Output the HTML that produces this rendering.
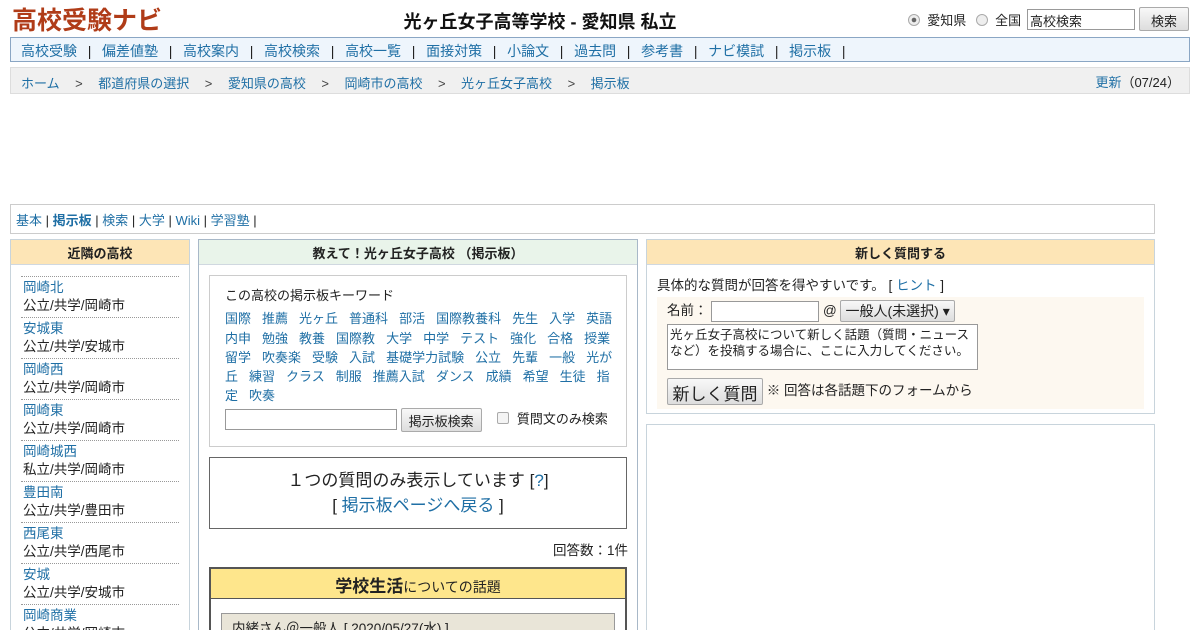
<!DOCTYPE html>
<html><head><meta charset="utf-8"><style>
*{box-sizing:border-box;margin:0;padding:0}
html{width:1200px;height:630px;overflow:hidden}
body{width:1200px;height:630px;overflow:hidden;background:#fff;font-family:"Liberation Sans","Noto Sans CJK JP",sans-serif;font-size:13px;color:#222;position:relative}
a{color:#1f6fa5;text-decoration:none}
.abs{position:absolute}
.logo{left:12px;top:1px;font-size:25px;font-weight:bold;color:#b03c18}
.title{left:0;width:1080px;top:8px;text-align:center;font-size:18px;font-weight:bold;color:#111}
.nav{left:10px;top:37px;width:1180px;height:25px;background:#eef5fc;border:1px solid #8aa6c4;padding:3px 10px;font-size:14px;white-space:nowrap}
.nav span{margin:0 10.7px;color:#222}
.bc{left:10px;top:67px;width:1180px;height:27px;background:#f0f0f0;border:1px solid #ddd;padding:5px 10px;font-size:13px;white-space:nowrap}
.bc span{margin:0 15.5px;color:#444}
.tabs{left:10px;top:204px;width:1145px;height:30px;border:1px solid #ccc;padding:5px 5px;font-size:13px}
.box{border:1px solid #c8d4dc}
.hd{height:25px;text-align:center;font-weight:bold;font-size:13px;padding-top:3px;border-bottom:1px solid #d0d8e0}
.left{left:10px;top:239px;width:180px;height:420px}
.left .hd{background:#fde5b6}
.item{margin:0 10px;border-top:1px dotted #999;padding:2px 2px 1px 2px;height:41px;font-size:13.5px;line-height:18px}
.mid{left:198px;top:239px;width:440px;height:420px;border-color:#a8b8c8}
.mid .hd{background:#e9f4ea}
.right{left:646px;top:239px;width:509px;height:175px}
.right .hd{background:#fde5b6}
.btn{border:1px solid #aaa;background:linear-gradient(#f8f8f8,#ddd);border-radius:2px;display:inline-block;text-align:center}
.kw{margin-top:4px}
.kw div{white-space:nowrap}
.kw a{margin-right:11px}
</style></head><body>
<div class="abs logo">高校受験ナビ</div>
<div class="abs title">光ヶ丘女子高等学校 - 愛知県 私立</div>
<div class="abs" style="left:908px;top:10px;font-size:13px;white-space:nowrap">
<span style="display:inline-block;width:12px;height:12px;border:1px solid #aaa;border-radius:50%;background:radial-gradient(#666 30%,#eee 35%);vertical-align:-1px"></span> &nbsp;愛知県
<span style="display:inline-block;width:12px;height:12px;border:1px solid #aaa;border-radius:50%;background:#eee;vertical-align:-1px;margin-left:6px"></span> &nbsp;全国</div>
<div class="abs" style="left:1027px;top:9px;width:108px;height:21px;border:1px solid #999;font-size:13px;padding:1px 2px">高校検索</div>
<div class="abs btn" style="left:1139px;top:7px;width:50px;height:24px;font-size:13px;padding-top:3px">検索</div>
<div class="abs nav"><a>高校受験</a><span>|</span><a>偏差値塾</a><span>|</span><a>高校案内</a><span>|</span><a>高校検索</a><span>|</span><a>高校一覧</a><span>|</span><a>面接対策</a><span>|</span><a>小論文</a><span>|</span><a>過去問</a><span>|</span><a>参考書</a><span>|</span><a>ナビ模試</a><span>|</span><a>掲示板</a><span>|</span></div>
<div class="abs bc"><a>ホーム</a><span>&gt;</span><a>都道府県の選択</a><span>&gt;</span><a>愛知県の高校</a><span>&gt;</span><a>岡崎市の高校</a><span>&gt;</span><a>光ヶ丘女子高校</a><span>&gt;</span><a>掲示板</a></div>
<div class="abs" style="right:20px;top:72px;font-size:13px"><a>更新</a>（07/24）</div>
<div class="abs tabs"><a>基本</a> | <a style="font-weight:bold">掲示板</a> | <a>検索</a> | <a>大学</a> | <a>Wiki</a> | <a>学習塾</a> |</div>

<div class="abs box left"><div class="hd">近隣の高校</div>
<div style="height:11px"></div>
<div class="item"><a>岡崎北</a><br>公立/共学/岡崎市</div>
<div class="item"><a>安城東</a><br>公立/共学/安城市</div>
<div class="item"><a>岡崎西</a><br>公立/共学/岡崎市</div>
<div class="item"><a>岡崎東</a><br>公立/共学/岡崎市</div>
<div class="item"><a>岡崎城西</a><br>私立/共学/岡崎市</div>
<div class="item"><a>豊田南</a><br>公立/共学/豊田市</div>
<div class="item"><a>西尾東</a><br>公立/共学/西尾市</div>
<div class="item"><a>安城</a><br>公立/共学/安城市</div>
<div class="item"><a>岡崎商業</a><br>公立/共学/岡崎市</div>
</div>

<div class="abs box mid"><div class="hd">教えて！光ヶ丘女子高校 （掲示板）</div></div>
<div class="abs" style="left:209px;top:275px;width:418px;height:172px;border:1px solid #ccc;padding:10px 15px;font-size:13px;line-height:19.3px">
<div>この高校の掲示板キーワード</div>
<div class="kw">
<div><a>国際</a><a>推薦</a><a>光ヶ丘</a><a>普通科</a><a>部活</a><a>国際教養科</a><a>先生</a><a>入学</a><a>英語</a></div>
<div><a>内申</a><a>勉強</a><a>教養</a><a>国際教</a><a>大学</a><a>中学</a><a>テスト</a><a>強化</a><a>合格</a><a>授業</a></div>
<div><a>留学</a><a>吹奏楽</a><a>受験</a><a>入試</a><a>基礎学力試験</a><a>公立</a><a>先輩</a><a>一般</a><a>光が</a></div>
<div><a>丘</a><a>練習</a><a>クラス</a><a>制服</a><a>推薦入試</a><a>ダンス</a><a>成績</a><a>希望</a><a>生徒</a><a>指</a></div>
<div><a>定</a><a>吹奏</a></div>
</div>
<div style="margin-top:2px;white-space:nowrap"><span style="display:inline-block;width:172px;height:21px;border:1px solid #999;vertical-align:middle"></span> <span class="btn" style="width:81px;height:24px;padding-top:3px;vertical-align:middle">掲示板検索</span>
<span style="display:inline-block;width:12px;height:12px;border:1px solid #aaa;border-radius:2px;margin:0 4px 0 12px;vertical-align:-1px;background:#f4f4f4"></span> 質問文のみ検索</div>
</div>
<div class="abs" style="left:209px;top:457px;width:418px;height:72px;border:1px solid #666;text-align:center;font-size:17px;line-height:25px;padding-top:10px">１つの質問のみ表示しています [<a>?</a>]<br>[ <a>掲示板ページへ戻る</a> ]</div>
<div class="abs" style="left:553px;top:539px;font-size:13.5px">回答数：1件</div>
<div class="abs" style="left:209px;top:567px;width:418px;height:100px;border:2px solid #555"><div style="background:#fee68c;height:30px;border-bottom:1px solid #555;text-align:center;font-size:14px;padding-top:3px"><b style="font-size:17px">学校生活</b>についての話題</div></div>
<div class="abs" style="left:221px;top:613px;width:394px;height:30px;background:#e9e5d8;border:1px solid #999;padding:3px 10px;font-size:13.5px">内緒さん＠一般人 [ 2020/05/27(水) ]</div>

<div class="abs box right"><div class="hd">新しく質問する</div>
<div style="padding:9px 10px 0;font-size:13.5px">具体的な質問が回答を得やすいです。 [ <a>ヒント</a> ]</div>
<div style="margin:3px 10px 0;background:#fdf8f0;height:112px;padding:2px 10px;font-size:13.5px;position:relative">
名前： <span style="display:inline-block;width:108px;height:21px;border:1px solid #999;vertical-align:middle;background:#fff"></span> @ <span class="btn" style="padding:0 4px;font-size:14px;vertical-align:middle">一般人(未選択) ▾</span>
<div style="margin-top:2px;width:311px;height:46px;border:1px solid #999;background:#fff;font-size:12.5px;line-height:16px;padding:2px;overflow:hidden">光ヶ丘女子高校について新しく話題（質問・ニュースなど）を投稿する場合に、ここに入力してください。</div>
<div style="margin-top:8px;white-space:nowrap"><span class="btn" style="width:96px;height:27px;font-size:17px;padding-top:1px;vertical-align:middle">新しく質問</span> ※ 回答は各話題下のフォームから</div>
</div></div>
<div class="abs box" style="left:646px;top:424px;width:509px;height:240px"></div>
</body></html>
